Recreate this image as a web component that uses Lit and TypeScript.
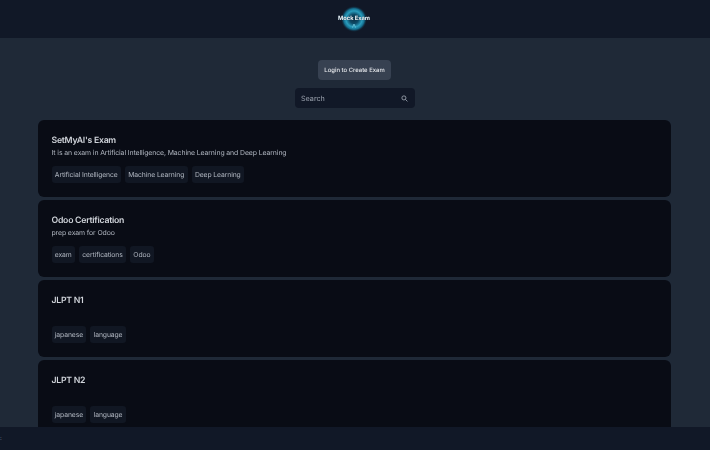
import { LitElement, html, css, svg } from "lit";
import { customElement } from "lit/decorators.js";

const exams = [
  { t: "SetMyAI's Exam", d: "It is an exam in Artificial Intelligence, Machine Learning and Deep Learning", tags: ["Artificial Intelligence", "Machine Learning", "Deep Learning"] },
  { t: "Odoo Certification", d: "prep exam for Odoo", tags: ["exam", "certifications", "Odoo"] },
  { t: "JLPT N1", d: "", tags: ["japanese", "language"] },
  { t: "JLPT N2", d: "", tags: ["japanese", "language"] },
];

@customElement("app-root")
export class AppRoot extends LitElement {
  static styles = css`
    :host { display: block; position: relative; width: 710px; height: 450px; overflow: hidden; background: #1f2937; font-family: Inter, "Liberation Sans", sans-serif; text-rendering: geometricPrecision; }
    .wrap { filter: blur(0.4px); height: 450px; }
    .head { height: 38px; background: #111827; display: flex; align-items: center; justify-content: center; padding-right: 2px; }
    .logo { position: relative; width: 32px; height: 26px; display: flex; align-items: center; justify-content: center; }
    .logo svg { position: absolute; left: 0; top: 0; }
    .logo span { position: relative; font-size: 5.7px; font-weight: 700; color: #eef4f8; white-space: nowrap; margin-top: -2px; text-shadow: 0 0 1px #0b2f44; }
    main { display: flex; flex-direction: column; align-items: center; padding-top: 22px; padding-right: 1px; }
    .login { height: 20px; width: 73px; justify-content: center; display: flex; align-items: center; background: #374151; border-radius: 4px; color: #e5e7eb; font-size: 5.95px; font-weight: 500; }
    .search { width: 120px; height: 20px; margin-top: 8px; box-sizing: border-box; padding: 0 7px 0 6.5px; background: #111827; border-radius: 4px; display: flex; align-items: center; justify-content: space-between; color: #9ca3af; font-size: 7.2px; }
    .list { width: 633px; margin-top: 12px; display: flex; flex-direction: column; gap: 3px; }
    .card { height: 77px; box-sizing: border-box; padding: 15px 13.5px 0; background: #090c15; border-radius: 6px; }
    h2 { margin: 0; height: 12px; line-height: 12px; font-size: 8.7px; letter-spacing: -0.25px; font-weight: 600; color: #d1d5db; }
    p { margin: -0.5px 0 0; height: 12px; line-height: 12px; font-size: 6.9px; letter-spacing: -0.1px; color: #b0b6c0; }
    .tags { display: flex; gap: 4px; margin-top: 7.5px; }
    .tag { height: 17px; padding: 0 3.3px; display: flex; align-items: center; background: #111723; border-radius: 3px; color: #b0b6c0; font-size: 6.8px; letter-spacing: -0.1px; }
    .foot { position: absolute; left: 0; right: 0; bottom: 0; height: 23px; background: #111827; color: #6b7280; font-size: 6px; display: flex; align-items: center; }
  `;

  render() {
    return html`
      <div class="wrap">
      <div class="head">
        <div class="logo">
          <svg width="32" height="26" viewBox="0 0 32 26">
            <defs>
              <radialGradient id="g">
                <stop offset="0" stop-color="#0c3044"/>
                <stop offset=".35" stop-color="#0e4a66"/>
                <stop offset=".62" stop-color="#2a9dbd"/>
                <stop offset=".8" stop-color="#156f8f"/>
                <stop offset="1" stop-color="#0d2a3e" stop-opacity="0"/>
              </radialGradient>
            </defs>
            ${svg`<circle cx="16" cy="13" r="13" fill="url(#g)"/><path d="M14.5 21.5 L16 18 L17.5 21.5" fill="none" stroke="#7fd6ea" stroke-width=".7"/>`}
          </svg>
          <span>Mock Exam</span>
        </div>
      </div>
      <main>
        <div class="login">Login to Create Exam</div>
        <div class="search">
          <span>Search</span>
          <svg width="7" height="7" viewBox="0 0 24 24" fill="none" stroke="#9ca3af" stroke-width="3"><circle cx="10" cy="10" r="7"/><path d="M15 15l7 7"/></svg>
        </div>
        <div class="list">
          ${exams.map(e => html`
            <div class="card">
              <h2>${e.t}</h2>
              <p>${e.d}</p>
              <div class="tags">${e.tags.map(t => html`<span class="tag">${t}</span>`)}</div>
            </div>`)}
        </div>
      </main>
      <div class="foot">:</div>
      </div>
    `;
  }
}
